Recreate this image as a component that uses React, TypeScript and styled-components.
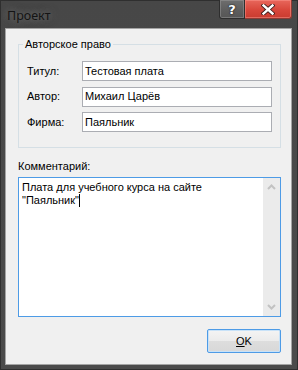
import React from "react";
import styled, { createGlobalStyle } from "styled-components";

const Global = createGlobalStyle`
  html, body { margin: 0; padding: 0; background: #ffffff; }
  body { font-family: "Liberation Sans", Arial, sans-serif; }
  * { box-sizing: border-box; }
`;

const Window = styled.div`
  width: 298px;
  height: 370px;
  display: flex;
  flex-direction: column;
  background: linear-gradient(#474747, #4b4b4b);
  box-shadow: inset 0 0 0 1px #2f2f2f;
`;

const TitleBar = styled.div`
  height: 28px;
  display: flex;
  align-items: center;
  padding-left: 7px;
  padding-right: 6px;
`;

const Title = styled.span`
  font-family: "Noto Sans", "Open Sans", sans-serif;
  font-size: 12.5px;
  color: #141414;
  margin-top: 2px;
  text-shadow: 0 0 6px rgba(120, 120, 120, 0.9), 0 0 10px rgba(110, 110, 110, 0.6);
`;

const Controls = styled.div`
  margin-left: auto;
  align-self: flex-start;
  display: flex;
  height: 19px;
`;

const CaptionButton = styled.div<{ $variant: "help" | "close" }>`
  width: ${(p) => (p.$variant === "close" ? 47 : 26)}px;
  height: 19px;
  display: flex;
  align-items: center;
  justify-content: center;
  border: 1px solid ${(p) => (p.$variant === "close" ? "#8e3a33" : "#2e2e2e")};
  border-top: none;
  border-left: ${(p) => (p.$variant === "close" ? "none" : "1px solid #2e2e2e")};
  border-radius: 0 0 ${(p) => (p.$variant === "close" ? "3px 0" : "0 3px")};
  background: ${(p) =>
    p.$variant === "close"
      ? "linear-gradient(#e8675c, #d8473b 55%, #c93b30)"
      : "linear-gradient(#6e6e6e, #5e5e5e 55%, #565656)"};
  box-shadow: inset 0 0 0 1px ${(p) => (p.$variant === "close" ? "rgba(255,160,150,0.45)" : "rgba(160,160,160,0.45)")};
  color: #ffffff;
  font-family: "DejaVu Sans", sans-serif;
  font-weight: bold;
  font-size: 13px;
  line-height: 1;
  text-shadow: 0 0 1px #222, 0 0 1px #222, 0 0 2px #333;
`;

const Client = styled.div`
  flex: 1;
  margin: 0 6px 5px 5px;
  border: 1px solid #a4a4a4;
  background: #f0f0f0;
  padding: 9px 10px 11px 12px;
  display: flex;
  flex-direction: column;
  font-size: 11px;
  line-height: 13px;
  color: #000000;
`;

const Group = styled.fieldset`
  margin: 0;
  padding: 10px 8px 15px 8px;
  border: 1px solid #d5dfe5;
  min-width: 0;
`;

const GroupTitle = styled.legend`
  padding: 0 2px;
  margin-left: -4px;
  font-size: 11px;
  line-height: 13px;
`;

const FieldGrid = styled.div`
  display: grid;
  grid-template-columns: 55px 190px;
  row-gap: 5.5px;
  align-items: center;
`;

const FieldLabel = styled.label`
  font-size: 11px;
`;

const TextBox = styled.div`
  height: 20px;
  border: 1px solid #abadb3;
  background: #ffffff;
  padding: 0 2px;
  display: flex;
  align-items: center;
  font-size: 11px;
`;

const CommentLabel = styled.div`
  margin-top: 12px;
  height: 13px;
`;

const Memo = styled.div`
  margin-top: 4px;
  height: 140px;
  border: 1px solid #4d9be6;
  background: #ffffff;
  display: flex;
`;

const MemoText = styled.div`
  flex: 1;
  padding: 3px 3px;
  white-space: pre-wrap;
  font-size: 11px;
  line-height: 13px;
`;

const Caret = styled.span`
  display: inline-block;
  width: 1px;
  height: 13px;
  background: #000000;
  vertical-align: top;
`;

const ScrollBar = styled.div`
  width: 17px;
  background: #ebebeb;
  display: flex;
  flex-direction: column;
  justify-content: space-between;
  align-items: center;
  padding: 6px 0 6px;
`;

const Footer = styled.div`
  margin-top: 12px;
  display: flex;
  justify-content: flex-end;
`;

const OkButton = styled.div`
  width: 74px;
  height: 24px;
  border: 1px solid #4d9be6;
  border-radius: 2px;
  background: linear-gradient(#f4f4f4, #ebebeb 50%, #dddddd 51%, #d8d8d8);
  box-shadow: inset 0 0 0 1px #c8e2f8;
  display: flex;
  align-items: center;
  justify-content: center;
  font-size: 11px;
`;

const Mnemonic = styled.span`
  text-decoration: underline;
`;

const Chevron = ({ up }: { up: boolean }) => (
  <svg width="9" height="6" viewBox="0 0 9 6">
    <path
      d={up ? "M1 5 L4.5 1.5 L8 5" : "M1 1 L4.5 4.5 L8 1"}
      fill="none"
      stroke="#c2c2c2"
      strokeWidth="2"
    />
  </svg>
);

export default function App() {
  return (
    <>
      <Global />
      <Window>
        <TitleBar>
          <Title>Проект</Title>
          <Controls>
            <CaptionButton $variant="help">?</CaptionButton>
            <CaptionButton $variant="close">
              <svg width="14" height="11" viewBox="0 0 14 11">
                <path d="M2.5 1.5 L11.5 9.5 M11.5 1.5 L2.5 9.5" stroke="#3a1a18" strokeWidth="4.2" strokeLinecap="square" />
                <path d="M2.5 1.5 L11.5 9.5 M11.5 1.5 L2.5 9.5" stroke="#ffffff" strokeWidth="2.4" strokeLinecap="square" />
              </svg>
            </CaptionButton>
          </Controls>
        </TitleBar>
        <Client>
          <Group>
            <GroupTitle>Авторское право</GroupTitle>
            <FieldGrid>
              <FieldLabel>Титул:</FieldLabel>
              <TextBox>Тестовая плата</TextBox>
              <FieldLabel>Автор:</FieldLabel>
              <TextBox>Михаил Царёв</TextBox>
              <FieldLabel>Фирма:</FieldLabel>
              <TextBox>Паяльник</TextBox>
            </FieldGrid>
          </Group>
          <CommentLabel>Комментарий:</CommentLabel>
          <Memo>
            <MemoText>
              {"Плата для учебного курса на сайте\n\"Паяльник\""}
              <Caret />
            </MemoText>
            <ScrollBar>
              <Chevron up />
              <Chevron up={false} />
            </ScrollBar>
          </Memo>
          <Footer>
            <OkButton>
              <Mnemonic>O</Mnemonic>K
            </OkButton>
          </Footer>
        </Client>
      </Window>
    </>
  );
}
